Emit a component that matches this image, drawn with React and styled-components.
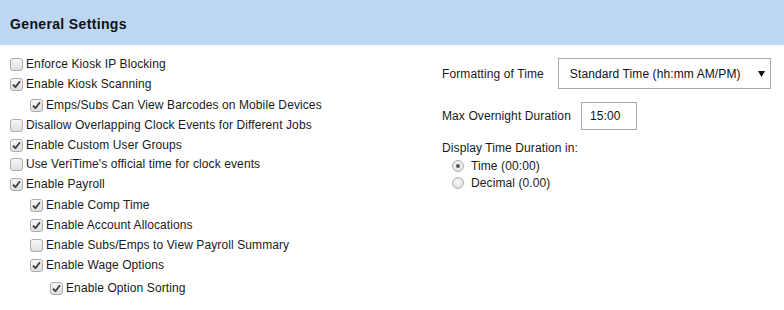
import React from "react";
import styled, { createGlobalStyle } from "styled-components";

const Global = createGlobalStyle`
  html, body { margin: 0; padding: 0; background: #ffffff; }
  body { font-family: "Liberation Sans", Arial, sans-serif; color: #1a1a1a; }
`;

const Page = styled.div`
  width: 784px;
  height: 310px;
  overflow: hidden;
  background: #fff;
`;

const Header = styled.div`
  height: 45px;
  background: #bdd7f2;
  display: flex;
  align-items: center;
  padding-left: 10px;
`;

const Title = styled.h2`
  margin: 0;
  font-size: 14px;
  font-weight: bold;
  color: #111;
  letter-spacing: 0.35px;
  padding-top: 2px;
`;

const Body = styled.div`
  display: grid;
  grid-template-columns: 432px 1fr;
  padding: 13px 10px 0 10px;
`;

const List = styled.div`
  display: flex;
  flex-direction: column;
`;

const Group = styled.div`
  display: flex;
  flex-direction: column;
  margin-top: ${(p) => p.$gap ?? 2}px;
  padding-left: 20px;
`;

const Row = styled.label`
  display: flex;
  align-items: flex-start;
  gap: 3px;
  height: ${(p) => (p.$nested ? 20 : 19.5)}px;
  font-size: 12px;
  line-height: 13px;
  letter-spacing: 0.1px;
  color: #1a1a1a;
`;

const Box = styled.span`
  flex: none;
  box-sizing: border-box;
  width: 13px;
  height: 13px;
  border: 1px solid #acacac;
  border-radius: 3px;
  background: linear-gradient(#f7f7f7, #dedede);
  display: flex;
  align-items: center;
  justify-content: center;
`;

const Text = styled.span`
  white-space: nowrap;
`;

const Check = ({ checked }) => (
  <Box>
    {checked && (
      <svg width="9" height="9" viewBox="0 0 9 9">
        <path d="M1 4.6 L3.4 7.2 L8 1.2" fill="none" stroke="#3a3a3a" strokeWidth="1.8" strokeLinejoin="round" />
      </svg>
    )}
  </Box>
);

const Item = ({ checked, nested, children }) => (
  <Row $nested={nested}>
    <Check checked={checked} />
    <Text>{children}</Text>
  </Row>
);

const Right = styled.div`
  display: flex;
  flex-direction: column;
`;

const FieldRow = styled.div`
  display: flex;
  align-items: center;
  gap: ${(p) => p.$gap}px;
  margin-bottom: ${(p) => p.$after}px;
  font-size: 12px;
  letter-spacing: 0.1px;
`;

const Select = styled.div`
  box-sizing: border-box;
  width: 213px;
  height: 31px;
  border: 1px solid #a9a9a9;
  display: flex;
  align-items: center;
  justify-content: space-between;
  padding: 0 5px 0 11px;
  font-size: 12px;
  color: #111;
`;

const Input = styled.div`
  box-sizing: border-box;
  width: 56px;
  height: 28px;
  border: 1px solid #a9a9a9;
  display: flex;
  align-items: center;
  padding-left: 8px;
  font-size: 12px;
  color: #111;
`;

const Caption = styled.div`
  font-size: 12px;
  line-height: 14px;
  letter-spacing: 0.1px;
`;

const Radios = styled.div`
  display: flex;
  flex-direction: column;
  padding-left: 10px;
  margin-top: 2px;
`;

const RadioRow = styled.label`
  display: flex;
  align-items: center;
  gap: 7px;
  height: 17px;
  font-size: 12px;
  letter-spacing: 0.1px;
`;

const Circle = styled.span`
  box-sizing: border-box;
  width: 12px;
  height: 12px;
  border-radius: 50%;
  border: 1px solid #b0b0b0;
  background: radial-gradient(circle at 50% 40%, #fafafa, #d8d8d8);
  display: flex;
  align-items: center;
  justify-content: center;
  &::after {
    content: "";
    width: 4px;
    height: 4px;
    border-radius: 50%;
    background: ${(p) => (p.$on ? "#555" : "transparent")};
  }
`;

export default function App() {
  return (
    <Page>
      <Global />
      <Header>
        <Title>General Settings</Title>
      </Header>
      <Body>
        <List>
          <Item>Enforce Kiosk IP Blocking</Item>
          <Item checked>Enable Kiosk Scanning</Item>
          <Group>
            <Item checked nested>Emps/Subs Can View Barcodes on Mobile Devices</Item>
          </Group>
          <Item>Disallow Overlapping Clock Events for Different Jobs</Item>
          <Item checked>Enable Custom User Groups</Item>
          <Item>Use VeriTime's official time for clock events</Item>
          <Item checked>Enable Payroll</Item>
          <Group>
            <Item checked nested>Enable Comp Time</Item>
            <Item checked nested>Enable Account Allocations</Item>
            <Item nested>Enable Subs/Emps to View Payroll Summary</Item>
            <Item checked nested>Enable Wage Options</Item>
            <Group $gap={3}>
              <Item checked nested>Enable Option Sorting</Item>
            </Group>
          </Group>
        </List>
        <Right>
          <FieldRow $gap={14} $after={13}>
            <span>Formatting of Time</span>
            <Select>
              <span>Standard Time (hh:mm AM/PM)</span>
              <svg width="7" height="6" viewBox="0 0 7 6">
                <path d="M0 0 H7 L3.5 6 Z" fill="#111" />
              </svg>
            </Select>
          </FieldRow>
          <FieldRow $gap={10} $after={11}>
            <span>Max Overnight Duration</span>
            <Input>15:00</Input>
          </FieldRow>
          <Caption>Display Time Duration in:</Caption>
          <Radios>
            <RadioRow>
              <Circle $on />
              <span>Time (00:00)</span>
            </RadioRow>
            <RadioRow>
              <Circle />
              <span>Decimal (0.00)</span>
            </RadioRow>
          </Radios>
        </Right>
      </Body>
    </Page>
  );
}
